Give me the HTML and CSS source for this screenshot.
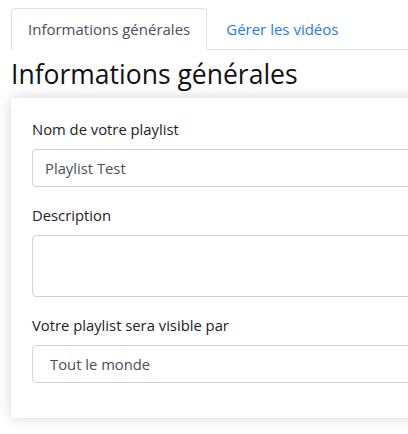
FILE: index.html
```html
<!DOCTYPE html>
<html lang="fr">
<head>
<meta charset="utf-8">
<link rel="stylesheet" href="styles.css">
</head>
<body>
<div class="page">
  <ul class="tabs">
    <li class="tab active">Informations générales</li>
    <li class="tab link">Gérer les vidéos</li>
  </ul>
  <h1 class="title">Informations générales</h1>
  <div class="card">
    <div class="group">
      <label class="label">Nom de votre playlist</label>
      <div class="field input">Playlist Test</div>
    </div>
    <div class="group">
      <label class="label">Description</label>
      <div class="field textarea"></div>
    </div>
    <div class="group last">
      <label class="label">Votre playlist sera visible par</label>
      <div class="field select">Tout le monde</div>
    </div>
  </div>
</div>
</body>
</html>
```
FILE: styles.css
```css
html {
  overflow: hidden;
}
html, body {
  margin: 0;
  padding: 0;
  background: #fff;
}
body {
  font-family: "Open Sans", "Liberation Sans", sans-serif;
  color: #212529;
}
.page {
  padding: 8px 0 20px 11px;
  width: 440px;
}
.tabs {
  list-style: none;
  margin: 0;
  padding: 0;
  display: flex;
  border-bottom: 1px solid #dee2e6;
  height: 41px;
}
.tab {
  padding: 0 16px;
  font-size: 15px;
  line-height: 40px;
  border: 1px solid transparent;
  border-top-left-radius: 4px;
  border-top-right-radius: 4px;
  margin-bottom: -1px;
}
.tab.active {
  color: #495057;
  background: #fff;
  border-color: #dee2e6 #dee2e6 #fff;
}
.tab.link {
  color: #1e7bf5;
  padding-left: 18px;
}
.title {
  margin: 8px 0 0;
  font-size: 26.5px;
  font-weight: 400;
  line-height: 32px;
  color: #111;
}
.card {
  margin-top: 8px;
  background: #fff;
  border-radius: 4px;
  box-shadow: 0 0 14px rgba(0, 0, 0, 0.17);
  padding: 20px 20px 35px 21px;
}
.group {
  margin-bottom: 17px;
}
.group.last {
  margin-bottom: 0;
}
.label {
  display: block;
  font-size: 14.8px;
  line-height: 22px;
  margin-bottom: 9px;
  color: #1d2124;
}
.field {
  border: 1px solid #ced4da;
  border-radius: 4px;
  box-sizing: border-box;
  font-size: 14.8px;
  color: #495057;
  padding: 0 12px;
}
.input {
  height: 38px;
  line-height: 36px;
}
.textarea {
  height: 62px;
}
.select {
  height: 38px;
  line-height: 36px;
  padding-left: 17px;
}
```
